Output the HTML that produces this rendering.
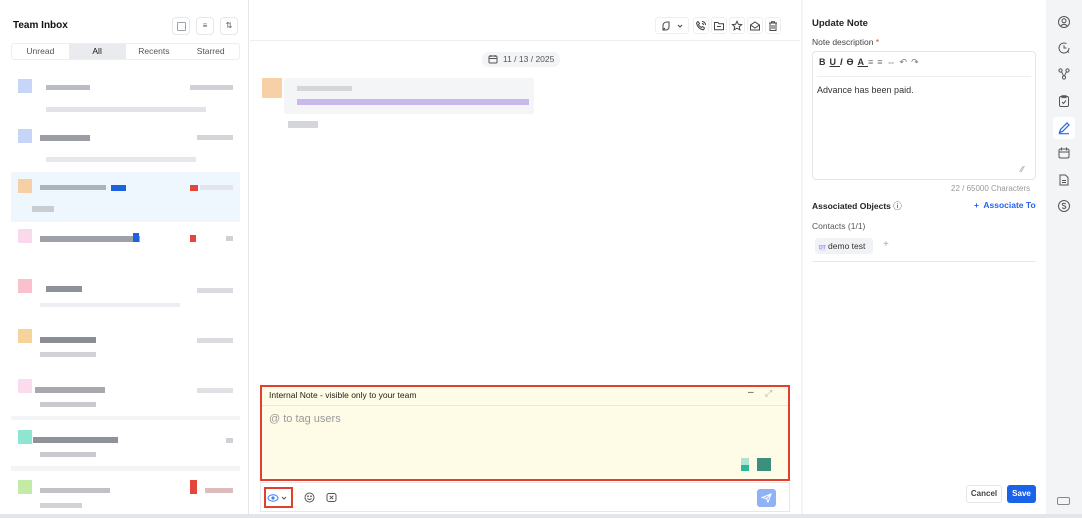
<!DOCTYPE html>
<html><head><meta charset="utf-8"><style>
*{box-sizing:border-box;margin:0;padding:0}
body{width:1082px;height:518px;overflow:hidden;background:#fff;font-family:"Liberation Sans",sans-serif;position:relative;color:#1f2937}
.a{position:absolute}
.p{position:absolute}
.ib{position:absolute;width:18px;height:18px;border:1px solid #e5e7eb;border-radius:4px;background:#fff}
.tb{position:absolute;top:17px;width:16px;height:17px;border:1px solid #eceef1;border-radius:3px;background:#fff}
.tb svg,.sb svg{position:absolute;left:50%;top:50%;transform:translate(-50%,-50%)}
.sb{position:absolute;left:1055px;width:18px;height:18px}
svg{display:block}
</style></head><body>
<div class="a" style="left:0;top:0;width:249px;height:518px;background:#fff;border-right:1px solid #e5e7eb"></div>
<div class="a" style="left:13px;top:20px;font-size:10px;font-weight:bold;color:#111">Team Inbox</div>
<div class="ib" style="left:172px;top:17px"><div class="a" style="left:4px;top:4px;width:9px;height:9px;border:1px solid #9ca3af;border-radius:1px"></div></div>
<div class="ib" style="left:196px;top:17px;font-size:8px;color:#555;text-align:center;line-height:16px">≡</div>
<div class="ib" style="left:220px;top:17px;font-size:8px;color:#555;text-align:center;line-height:16px">⇅</div>
<div class="a" style="left:11px;top:43px;width:229px;height:17px;border:1px solid #eceef1;border-radius:3px;display:flex;font-size:8.5px;color:#555">
<div style="flex:1;text-align:center;line-height:15px">Unread</div>
<div style="flex:1;text-align:center;line-height:15px;background:#e9ebef;color:#111">All</div>
<div style="flex:1;text-align:center;line-height:15px">Recents</div>
<div style="flex:1;text-align:center;line-height:15px">Starred</div></div>
<div class="a" style="left:11px;top:172px;width:229px;height:50px;background:#eef6fe"></div>
<div class="a" style="left:11px;top:416px;width:229px;height:4px;background:#f3f4f6"></div>
<div class="a" style="left:11px;top:466px;width:229px;height:5px;background:#f3f4f6"></div>
<div class="p" style="left:18px;top:79px;width:14px;height:14px;background:#c7d6f7"></div>
<div class="p" style="left:46px;top:85px;width:44px;height:5px;background:#b9bcc2"></div>
<div class="p" style="left:190px;top:85px;width:43px;height:5px;background:#cfd1d6"></div>
<div class="p" style="left:46px;top:107px;width:160px;height:5px;background:#e2e3e6"></div>
<div class="p" style="left:18px;top:129px;width:14px;height:14px;background:#c7d6f7"></div>
<div class="p" style="left:40px;top:135px;width:50px;height:6px;background:#9a9da3"></div>
<div class="p" style="left:197px;top:135px;width:36px;height:5px;background:#d3d5d9"></div>
<div class="p" style="left:46px;top:157px;width:150px;height:5px;background:#e6e7ea"></div>
<div class="p" style="left:18px;top:179px;width:14px;height:14px;background:#f7cfa4"></div>
<div class="p" style="left:40px;top:185px;width:66px;height:5px;background:#aeb3ba"></div>
<div class="p" style="left:111px;top:185px;width:15px;height:6px;background:#1d63e0"></div>
<div class="p" style="left:190px;top:185px;width:8px;height:6px;background:#e5463b"></div>
<div class="p" style="left:200px;top:185px;width:33px;height:5px;background:#e3e5ea"></div>
<div class="p" style="left:32px;top:206px;width:22px;height:6px;background:#c9ccd2"></div>
<div class="p" style="left:18px;top:229px;width:14px;height:14px;background:#fbd9ec"></div>
<div class="p" style="left:40px;top:236px;width:100px;height:6px;background:#9ea1a7"></div>
<div class="p" style="left:133px;top:233px;width:6px;height:9px;background:#1d63e0"></div>
<div class="p" style="left:190px;top:235px;width:6px;height:7px;background:#e5463b"></div>
<div class="p" style="left:226px;top:236px;width:7px;height:5px;background:#cfd1d6"></div>
<div class="p" style="left:18px;top:279px;width:14px;height:14px;background:#f8c1cc"></div>
<div class="p" style="left:46px;top:286px;width:36px;height:6px;background:#8e9197"></div>
<div class="p" style="left:197px;top:288px;width:36px;height:5px;background:#d9dbe0"></div>
<div class="p" style="left:40px;top:303px;width:140px;height:4px;background:#eceef1"></div>
<div class="p" style="left:18px;top:329px;width:14px;height:14px;background:#f6d39a"></div>
<div class="p" style="left:40px;top:337px;width:56px;height:6px;background:#8a8d93"></div>
<div class="p" style="left:197px;top:338px;width:36px;height:5px;background:#d9dbe0"></div>
<div class="p" style="left:40px;top:352px;width:56px;height:5px;background:#d0d2d7"></div>
<div class="p" style="left:18px;top:379px;width:14px;height:14px;background:#fbdcee"></div>
<div class="p" style="left:35px;top:387px;width:70px;height:6px;background:#a7a9af"></div>
<div class="p" style="left:197px;top:388px;width:36px;height:5px;background:#dfe1e5"></div>
<div class="p" style="left:40px;top:402px;width:56px;height:5px;background:#c8cad0"></div>
<div class="p" style="left:18px;top:430px;width:14px;height:14px;background:#8fe6d0"></div>
<div class="p" style="left:33px;top:437px;width:85px;height:6px;background:#8f9298"></div>
<div class="p" style="left:226px;top:438px;width:7px;height:5px;background:#cfd1d6"></div>
<div class="p" style="left:40px;top:452px;width:56px;height:5px;background:#c8cad0"></div>
<div class="p" style="left:18px;top:480px;width:14px;height:14px;background:#c3eba6"></div>
<div class="p" style="left:40px;top:488px;width:70px;height:5px;background:#c0c2c8"></div>
<div class="p" style="left:190px;top:480px;width:7px;height:14px;background:#e5463b"></div>
<div class="p" style="left:205px;top:488px;width:28px;height:5px;background:#dcbcbc"></div>
<div class="p" style="left:40px;top:503px;width:42px;height:5px;background:#d0d2d7"></div>
<div class="a" style="left:250px;top:40px;width:550px;height:1px;background:#eceef1"></div>
<div class="a" style="left:655px;top:17px;width:34px;height:17px;border:1px solid #eceef1;border-radius:3px">
<svg width="34" height="17" viewBox="0 0 34 17" fill="none" stroke="#444" stroke-width="1"><path d="M7 12 V7 a4 4 0 0 1 4-3 h2 v5 a3 3 0 0 1-3 3z M7 12 l2-2"/><path d="M22 7 l2 2 l2-2"/></svg></div>
<div class="tb" style="left:693px"><svg width="12" height="12" viewBox="0 0 12 12" fill="none" stroke="#444"><path d="M3 1.5 l1.5 2 -1 1.2 a6 6 0 0 0 2.8 2.8 l1.2-1 2 1.5 -1 1.8 C5 9.5 2.5 7 1.5 3z M7 1.5a3.5 3.5 0 0 1 3.5 3.5 M7 3.5a1.5 1.5 0 0 1 1.5 1.5"/></svg></div>
<div class="tb" style="left:711px"><svg width="12" height="12" viewBox="0 0 12 12" fill="none" stroke="#444"><path d="M1.5 2.5h3.5l1 1.2h4.5v6h-9z M4 6.5h4"/></svg></div>
<div class="tb" style="left:729px"><svg width="12" height="12" viewBox="0 0 12 12" fill="none" stroke="#444"><path d="M6 1.3l1.4 3 3.2.3-2.4 2.1.8 3.2L6 8.2 3 9.9l.8-3.2L1.4 4.6l3.2-.3z"/></svg></div>
<div class="tb" style="left:747px"><svg width="12" height="12" viewBox="0 0 12 12" fill="none" stroke="#444"><path d="M1.5 5 L6 2 L10.5 5 V10 H1.5z M1.5 5 L6 8 L10.5 5"/></svg></div>
<div class="tb" style="left:765px"><svg width="12" height="12" viewBox="0 0 12 12" fill="none" stroke="#444"><path d="M2 3h8 M4.5 3V1.8h3V3 M3 3v7.5h6V3 M5 5v4 M7 5v4"/></svg></div>
<div class="a" style="left:482px;top:52px;width:78px;height:15px;background:#f3f4f6;border-radius:7px;font-size:8.5px;color:#555;line-height:15px;padding-left:21px;white-space:nowrap">11 / 13 / 2025</div>
<svg class="a" style="left:488px;top:54px" width="10" height="10" viewBox="0 0 10 10" fill="none" stroke="#555"><rect x="1" y="2" width="8" height="7" rx="1"/><path d="M1 4.5h8 M3 1v2 M7 1v2"/></svg>
<div class="a" style="left:262px;top:78px;width:20px;height:20px;background:#f8d0a8"></div>
<div class="a" style="left:284px;top:78px;width:250px;height:36px;background:#f4f5f7;border-radius:3px"></div>
<div class="a" style="left:297px;top:86px;width:55px;height:5px;background:#d4d6da"></div>
<div class="a" style="left:297px;top:99px;width:232px;height:6px;background:#c8b8ec"></div>
<div class="a" style="left:288px;top:121px;width:30px;height:7px;background:#d4d6da"></div>
<div class="a" style="left:260px;top:385px;width:530px;height:96px;background:#fefbe6;border:2px solid #e0412f"></div>
<div class="a" style="left:262px;top:387px;width:526px;height:19px;border-bottom:1px solid #efe9c8"></div>
<div class="a" style="left:269px;top:390px;font-size:8.5px;color:#222">Internal Note - visible only to your team</div>
<div class="a" style="left:748px;top:387px;font-size:10px;color:#444">–</div>
<div class="a" style="left:765px;top:388px;font-size:9px;color:#aaa">⤢</div>
<div class="a" style="left:269px;top:413px;font-size:11px;color:#9a9a9a">@ to tag users</div>
<div class="a" style="left:741px;top:458px;width:8px;height:13px;background:#aee3d6"></div>
<div class="a" style="left:741px;top:465px;width:8px;height:6px;background:#2bb894"></div>
<div class="a" style="left:757px;top:458px;width:14px;height:13px;background:#3b8f7d"></div>
<div class="a" style="left:260px;top:482px;width:530px;height:30px;border:1px solid #e5e7eb;background:#fff"></div>
<div class="a" style="left:264px;top:487px;width:29px;height:21px;border:2px solid #e0412f"></div>
<svg class="a" style="left:267px;top:493px" width="24" height="10" viewBox="0 0 24 10" fill="none"><ellipse cx="6" cy="5" rx="5" ry="3.2" stroke="#3b82f6"/><circle cx="6" cy="5" r="1.6" fill="#3b82f6"/><path d="M15 4l2 2 2-2" stroke="#555"/></svg>
<svg class="a" style="left:304px;top:492px" width="11" height="11" viewBox="0 0 11 11" fill="none" stroke="#555"><circle cx="5.5" cy="5.5" r="4.5"/><path d="M3.5 6.5 q2 2 4 0"/><circle cx="4" cy="4.3" r=".4" fill="#555"/><circle cx="7" cy="4.3" r=".4" fill="#555"/></svg>
<svg class="a" style="left:326px;top:492px" width="11" height="11" viewBox="0 0 11 11" fill="none" stroke="#555"><rect x="1" y="1.5" width="9" height="8" rx="2"/><path d="M3.8 3.8l3.4 3.4 M7.2 3.8l-3.4 3.4"/></svg>
<div class="a" style="left:757px;top:489px;width:19px;height:18px;background:#8eb2f4;border-radius:3px"></div>
<svg class="a" style="left:761px;top:493px" width="11" height="10" viewBox="0 0 11 10" fill="none" stroke="#fff"><path d="M1 4.5 L10 1 L7 9 L5.5 5.5z M5.5 5.5 L10 1"/></svg>
<div class="a" style="left:801px;top:0;width:2px;height:518px;background:#f3f4f6"></div>
<div class="a" style="left:812px;top:18px;font-size:9.5px;font-weight:bold;color:#222">Update Note</div>
<div class="a" style="left:812px;top:37px;font-size:8.5px;color:#444">Note description <span style="color:#e0412f">*</span></div>
<div class="a" style="left:812px;top:51px;width:224px;height:129px;border:1px solid #e3e5e8;border-radius:4px"></div>
<div class="a" style="left:817px;top:76px;width:214px;height:1px;background:#eceef1"></div>
<div class="a" style="left:819px;top:57px;font-size:9px;color:#333;letter-spacing:4px;font-weight:bold">B<u>U</u><i>I</i>ϴ<u>A</u><span style="font-weight:normal;color:#777">≡≡⇔↶↷</span></div>
<div class="a" style="left:817px;top:85px;font-size:9px;color:#333">Advance has been paid.</div>
<div class="a" style="left:1021px;top:165px;font-size:8px;color:#888">⁄⁄</div>
<div class="a" style="left:951px;top:184px;font-size:8px;color:#999">22 / 65000 Characters</div>
<div class="a" style="left:812px;top:200px;font-size:8.5px;font-weight:bold;color:#222">Associated Objects <span style="font-weight:normal">ⓘ</span></div>
<div class="a" style="left:974px;top:200px;font-size:8.5px;font-weight:bold;color:#2563eb">+&nbsp; Associate To</div>
<div class="a" style="left:812px;top:221px;font-size:8.5px;color:#555">Contacts (1/1)</div>
<div class="a" style="left:815px;top:238px;width:58px;height:16px;background:#f1f2f5;border-radius:3px;font-size:8.5px;color:#333;line-height:16px;padding-left:4px"><span style="font-size:5px;color:#7b6fd6;background:#e5e2fb">DT</span> demo test</div>
<div class="a" style="left:883px;top:239px;font-size:10px;color:#aaa">+</div>
<div class="a" style="left:812px;top:261px;width:224px;height:1px;background:#e5e7eb"></div>
<div class="a" style="left:966px;top:485px;width:36px;height:18px;border:1px solid #e3e5e8;border-radius:3px;font-size:8px;font-weight:bold;color:#444;text-align:center;line-height:16px">Cancel</div>
<div class="a" style="left:1007px;top:485px;width:29px;height:18px;background:#1a63e8;border-radius:3px;font-size:8px;font-weight:bold;color:#fff;text-align:center;line-height:18px">Save</div>
<div class="a" style="left:1046px;top:0;width:36px;height:518px;background:#f3f4f6"></div>
<div class="a" style="left:1053px;top:117px;width:22px;height:22px;background:#fff;border-radius:4px"></div>
<div class="sb" style="top:13px"><svg width="13" height="13" viewBox="0 0 13 13" fill="none" stroke="#555"><circle cx="6.5" cy="6.5" r="5.5"/><circle cx="6.5" cy="5.3" r="2"/><path d="M3.3 10.3 q3.2-3 6.4 0"/></svg></div>
<div class="sb" style="top:39px"><svg width="13" height="13" viewBox="0 0 13 13" fill="none" stroke="#555"><path d="M11.5 6.5 A5 5 0 1 1 9 2.2 M6.5 3.8v2.7h2.5 M9.5 9.5l2 1.5"/></svg></div>
<div class="sb" style="top:65px"><svg width="13" height="13" viewBox="0 0 13 13" fill="none" stroke="#555"><circle cx="3" cy="3" r="1.6"/><circle cx="10" cy="3" r="1.6"/><circle cx="6.5" cy="10" r="1.6"/><path d="M4 4.2l2 4 M9 4.2l-2 4"/></svg></div>
<div class="sb" style="top:92px"><svg width="13" height="13" viewBox="0 0 13 13" fill="none" stroke="#555"><rect x="2" y="2" width="9" height="10" rx="1.5"/><path d="M4.5 1.3h4v1.8h-4z M4.5 7.5l1.5 1.5 2.5-3"/></svg></div>
<div class="sb" style="top:119px"><svg width="13" height="13" viewBox="0 0 13 13" fill="none" stroke="#2563eb" stroke-width="1.2"><path d="M2 11 L3 8 L9.5 1.5 L11.5 3.5 L5 10z M1.5 12.2h10"/></svg></div>
<div class="sb" style="top:144px"><svg width="13" height="13" viewBox="0 0 13 13" fill="none" stroke="#555"><rect x="1.5" y="2.5" width="10" height="9" rx="1.5"/><path d="M1.5 5.5h10 M4 1v3 M9 1v3"/></svg></div>
<div class="sb" style="top:171px"><svg width="13" height="13" viewBox="0 0 13 13" fill="none" stroke="#555"><path d="M2.5 1.5h5.5l2.5 2.5v7.5h-8z M4.5 7h4 M4.5 9h4"/></svg></div>
<div class="sb" style="top:197px"><svg width="13" height="13" viewBox="0 0 13 13" fill="none" stroke="#555"><circle cx="6.5" cy="6.5" r="5.5"/><path d="M8.3 4.6 q-1.8-1.6-3.4-.3 q-.6 1.4 1.6 1.9 q2.4.6 1.7 2.1 q-1.6 1.4-3.6-.2"/></svg></div>
<div class="a" style="left:1057px;top:497px;width:13px;height:8px;border:1px solid #888;border-radius:2px"></div>
<div class="a" style="left:0;top:514px;width:1082px;height:4px;background:#e4e5e8"></div>
</body></html>
